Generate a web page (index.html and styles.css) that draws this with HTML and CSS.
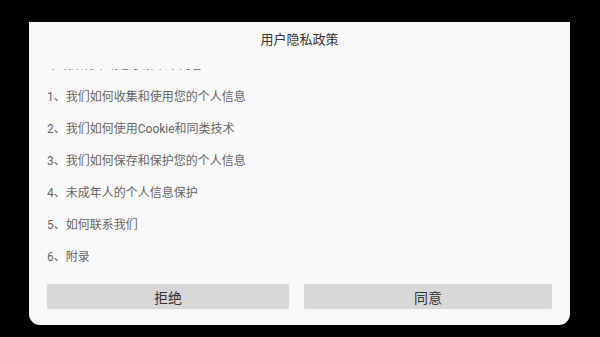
FILE: index.html
```html
<!doctype html>
<html lang="zh-CN">
<head>
    <meta charset="UTF-8"/>
    <meta name="viewport" content="width=device-width, initial-scale=1.0"/>
    <title>用户隐私政策</title>
    <link rel="stylesheet" href="styles.css">
</head>
<body>
<div class="dialog">
    <h1 class="dialog-title">用户隐私政策</h1>

    <div class="policy-scroll" id="policy-scroll">
        <ul class="policy-list">
            <li>本政策将帮助您了解以下内容：</li>
            <li>1、我们如何收集和使用您的个人信息</li>
            <li>2、我们如何使用Cookie和同类技术</li>
            <li>3、我们如何保存和保护您的个人信息</li>
            <li>4、未成年人的个人信息保护</li>
            <li>5、如何联系我们</li>
            <li>6、附录</li>
        </ul>
    </div>

    <div class="actions">
        <button type="button" class="btn">拒绝</button>
        <button type="button" class="btn">同意</button>
    </div>
</div>

<script>
    document.getElementById("policy-scroll").scrollTop = 20;
</script>
</body>
</html>
```

FILE: styles.css
```css
html,
body {
    height: 100%;
}

body {
    margin: 0;
    background: #000;
    font-family: Roboto, "Noto Sans CJK SC", sans-serif;
    overflow: hidden;
}

.dialog {
    box-sizing: border-box;
    width: 541px;
    margin: 22px 0 0 29px;
    padding: 0 18px 16px;
    background: #f9f9f9;
    border-radius: 0 0 11px 11px;
}

.dialog-title {
    margin: 0;
    height: 36px;
    line-height: 36px;
    text-align: center;
    font-size: 13px;
    font-weight: normal;
    color: #333;
}

.policy-scroll {
    margin-top: 11px;
    height: 204px;
    overflow-y: auto;
    scrollbar-width: none;
}

.policy-scroll::-webkit-scrollbar {
    display: none;
}

.policy-list {
    list-style: none;
    margin: 0;
    padding: 0;
}

.policy-list li {
    height: 32px;
    line-height: 32px;
    font-size: 12px;
    color: #666;
}

.actions {
    display: grid;
    grid-template-columns: 242fr 248fr;
    gap: 15px;
    margin-top: 11px;
}

.btn {
    height: 25px;
    padding: 0;
    border: none;
    border-radius: 2px;
    background: #d7d8d7;
    font-family: Roboto, "Noto Sans CJK SC", sans-serif;
    font-size: 14px;
    color: #333;
    box-shadow: 0 0 1px rgba(0, 0, 0, 0.15);
}
```
